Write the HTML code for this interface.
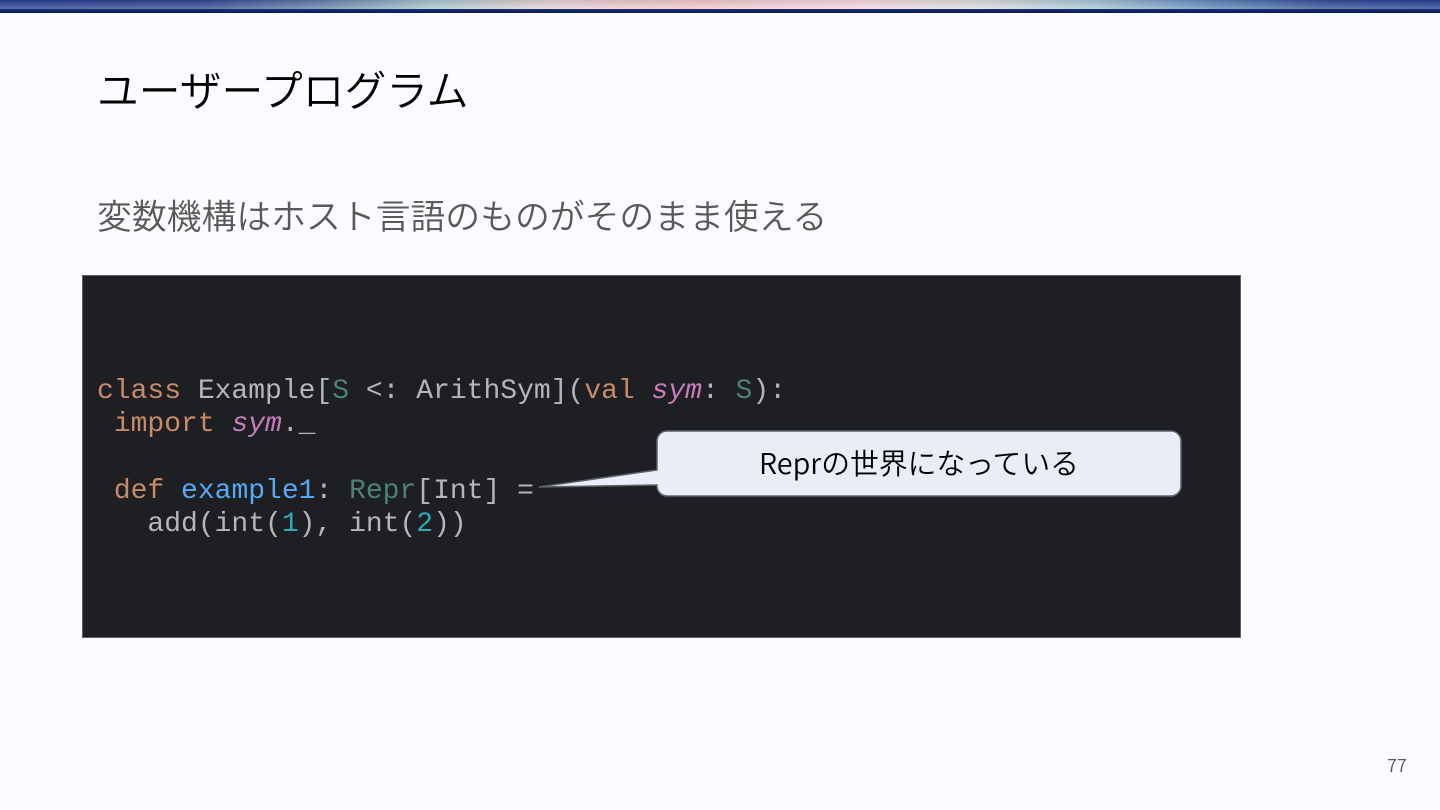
<!DOCTYPE html>
<html lang="ja"><head><meta charset="utf-8">
<style>
html,body{margin:0;padding:0}
body{width:1440px;height:810px;background:#fbfcff;position:relative;overflow:hidden;font-family:"Liberation Sans","Noto Sans CJK JP",sans-serif}
.bar{position:absolute;left:0;top:0;width:1440px;height:10px;background:linear-gradient(90deg,#1f3a8a 0,#2b4288 14%,#5e7ca0 22%,#a9c8c8 30%,#e9d4cc 38%,#f6c9c4 48%,#fbdcdc 60%,#dfe0d8 68%,#a5c8d0 76%,#5d88b4 84%,#2c4a90 92%,#1f3a8a 100%)}
.shade{position:absolute;left:0;top:0;width:1440px;height:10px;background:linear-gradient(180deg,rgba(40,50,120,.14),rgba(255,255,255,.3))}
.bar2{position:absolute;left:0;top:9px;width:1440px;height:4px;background:linear-gradient(180deg,#1b2f7a,#0b1a55)}
.t{position:absolute;white-space:nowrap;font-weight:350}
#title{left:97px;top:59px;font-size:41.8px;line-height:60px;color:#000;font-family:"Noto Sans CJK JP",sans-serif}
#sub{left:97px;top:190px;font-size:34.85px;line-height:50px;color:#595959;font-family:"Noto Sans CJK JP",sans-serif}
#code{position:absolute;left:82px;top:275px;width:1157px;height:361px;background:#1e1f23;border:1px solid #5f6062}
pre{position:absolute;margin:0;left:97px;top:375px;font-family:"Liberation Mono",monospace;font-size:28px;line-height:33.2px;color:#b4b6bc}
.k{color:#c98a6a}.s{color:#4f8078}.f{color:#56a8f5}.n{color:#2aacb8}.i{color:#c77dbb;font-style:italic}
#num{left:1387px;top:752px;font-size:18px;line-height:26px;color:#595959;font-family:"Noto Sans CJK JP",sans-serif}
svg{position:absolute;left:0;top:0}
#call{left:659px;top:431px;width:520px;height:65px;line-height:63px;text-align:center;font-size:28.8px;color:#000;font-family:"Noto Sans CJK JP",sans-serif}
</style></head><body>
<div class="bar"></div><div class="shade"></div><div class="bar2"></div>
<div class="t" id="title">ユーザープログラム</div>
<div class="t" id="sub">変数機構はホスト言語のものがそのまま使える</div>
<div id="code"></div>
<pre><span class="k">class</span> Example[<span class="s">S</span> &lt;: ArithSym](<span class="k">val</span> <span class="i">sym</span>: <span class="s">S</span>):
 <span class="k">import</span> <span class="i">sym</span>._

 <span class="k">def</span> <span class="f">example1</span>: <span class="s">Repr</span>[Int] =
   add(int(<span class="n">1</span>), int(<span class="n">2</span>))</pre>
<svg width="1440" height="810" viewBox="0 0 1440 810"><path d="M667 431H1171a10 10 0 0 1 10 10V486a10 10 0 0 1-10 10H667a10 10 0 0 1-10-10V485L539 487L657 470V441a10 10 0 0 1 10-10Z" fill="#e8edf8" stroke="#5f6368" stroke-width="1.5"/></svg>
<div class="t" id="call">Reprの世界になっている</div>
<div class="t" id="num">77</div>
</body></html>
